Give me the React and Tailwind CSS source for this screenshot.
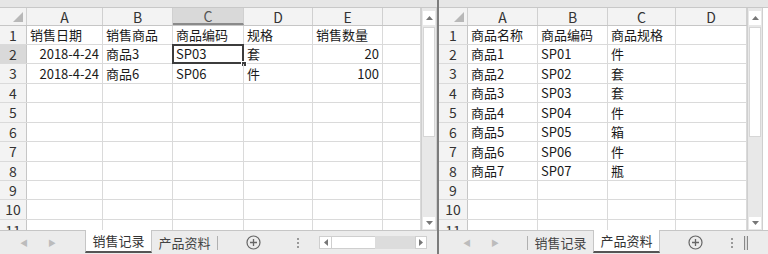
import React from 'react'

const font = { fontFamily: '"Noto Sans CJK SC", "Noto Sans", sans-serif' }

const rowH = ['h-[19px]', 'h-[19px]', 'h-[20px]', 'h-[19px]', 'h-[20px]', 'h-[19px]', 'h-[20px]', 'h-[19px]', 'h-[19px]', 'h-[20px]']

const Corner = () => (
  <svg width="10" height="10" viewBox="0 0 10 10" className="absolute right-[3px] bottom-[3px]">
    <polygon points="10,0 10,10 0,10" fill="#b8b8b8" />
  </svg>
)

const Sheet = ({ cols, rows, selCol, selRow, selCell }) => (
  <div className="flex-1 flex flex-col overflow-hidden">
    {/* column headers */}
    <div className="flex h-[18px] shrink-0 bg-[#f3f3f3] border-b border-[#c6c6c6]">
      {cols.map((c, i) => (
        <div
          key={i}
          className={`relative shrink-0 flex items-center justify-center border-r border-[#d0d0d0] text-[14px] leading-none ${
            i === selCol ? 'bg-[#d9d9d9] text-[#555] border-b-2 border-b-[#8a8a8a]' : 'text-[#333]'
          } ${c.w} ${c.grow ? 'flex-1' : ''}`}
        >
          {i === 0 ? <Corner /> : c.label}
        </div>
      ))}
    </div>
    {/* data rows */}
    {Array.from({ length: 11 }).map((_, r) => (
      <div key={r} className={`flex shrink-0 border-b border-[#dadada] ${r < 10 ? rowH[r] : 'flex-1'}`}>
        {cols.map((c, i) => {
          if (i === 0) {
            return (
              <div
                key={i}
                className={`shrink-0 flex items-center justify-center border-r border-[#c6c6c6] text-[14px] ${
                  r + 1 === selRow ? 'bg-[#d9d9d9]' : 'bg-[#f3f3f3]'
                } text-[#333] ${c.w}`}
              >
                {r + 1}
              </div>
            )
          }
          const v = rows[r] ? rows[r][i - 1] : null
          const right = typeof v === 'object' && v !== null
          const isSel = selCell && selCell[0] === r + 1 && selCell[1] === i
          return (
            <div
              key={i}
              className={`relative shrink-0 flex items-center px-[3px] border-r border-[#dadada] text-[13px] text-[#1a1a1a] whitespace-nowrap ${
                right ? 'justify-end text-[13.5px]' : ''
              } ${c.w} ${c.grow ? 'flex-1' : ''}`}
            >
              {right ? v.r : v}
              {isSel && (
                <>
                  <div className="absolute -left-px -top-px -right-px -bottom-px border-2 border-[#3c3c3c]" />
                  <div className="absolute -right-[4px] -bottom-[4px] w-[6px] h-[6px] bg-[#3c3c3c] border border-white" />
                </>
              )}
            </div>
          )
        })}
      </div>
    ))}
  </div>
)

const VScroll = () => (
  <div className="w-[16px] shrink-0 flex flex-col bg-[#e8e8e8] border-l border-[#cfcfcf] border-r border-r-[#cfcfcf]">
    <div className="h-[14px] mt-[3px] mx-[1px] bg-white flex items-center justify-center">
      <svg width="7" height="4" viewBox="0 0 7 4"><polygon points="0,4 3.5,0 7,4" fill="#777" /></svg>
    </div>
    <div className="h-[110px] mx-[1px] mt-[2px] bg-white border border-[#d6d6d6]" />
    <div className="flex-1" />
    <div className="h-[12px] mb-[1px] mx-[1px] bg-white flex items-center justify-center">
      <svg width="7" height="4" viewBox="0 0 7 4"><polygon points="0,0 3.5,4 7,0" fill="#777" /></svg>
    </div>
  </div>
)

const Arrows = () => (
  <div className="flex items-center gap-[20px] text-[#bcbcbc] text-[8px]">
    <span>◀</span>
    <span>▶</span>
  </div>
)

const Plus = () => (
  <svg width="15" height="15" viewBox="0 0 15 15">
    <circle cx="7.5" cy="7.5" r="6.5" fill="none" stroke="#666" strokeWidth="1.2" />
    <path d="M7.5 4v7M4 7.5h7" stroke="#666" strokeWidth="1.3" />
  </svg>
)

const Dots = () => (
  <div className="flex flex-col gap-[2px]">
    <span className="w-[2px] h-[2px] bg-[#999]" />
    <span className="w-[2px] h-[2px] bg-[#999]" />
    <span className="w-[2px] h-[2px] bg-[#999]" />
  </div>
)

const Tab = ({ label, active }) => (
  <div
    className={`h-full flex items-center justify-center text-[13px] ${
      active
        ? 'w-[67px] bg-white text-[#333] border-x border-[#c6c6c6] border-b-2 border-b-[#555] -mt-px'
        : 'w-[65px] text-[#444]'
    }`}
  >
    {label}
  </div>
)

const leftCols = [
  { w: 'w-[27px]' },
  { w: 'w-[76px]', label: 'A' },
  { w: 'w-[70px]', label: 'B' },
  { w: 'w-[71px]', label: 'C' },
  { w: 'w-[69px]', label: 'D' },
  { w: 'w-[70px]', label: 'E' },
  { w: 'w-[10px]', grow: true, label: '' },
]

const leftRows = [
  ['销售日期', '销售商品', '商品编码', '规格', '销售数量'],
  [{ r: '2018-4-24' }, '商品3', 'SP03', '套', { r: '20' }],
  [{ r: '2018-4-24' }, '商品6', 'SP06', '件', { r: '100' }],
]

const rightCols = [
  { w: 'w-[29px]' },
  { w: 'w-[70px]', label: 'A' },
  { w: 'w-[70px]', label: 'B' },
  { w: 'w-[68px]', label: 'C' },
  { w: 'w-[10px]', grow: true, label: 'D' },
]

const rightRows = [
  ['商品名称', '商品编码', '商品规格'],
  ['商品1', 'SP01', '件'],
  ['商品2', 'SP02', '套'],
  ['商品3', 'SP03', '套'],
  ['商品4', 'SP04', '件'],
  ['商品5', 'SP05', '箱'],
  ['商品6', 'SP06', '件'],
  ['商品7', 'SP07', '瓶'],
]

export default function App() {
  return (
    <div className="w-[768px] h-[254px] flex bg-white overflow-hidden" style={font}>
      {/* Left window */}
      <div className="w-[437px] shrink-0 flex flex-col">
        <div className="h-[8px] shrink-0 bg-[#e6e6e6] border-b border-[#c8c8c8]" />
        <div className="h-[222px] shrink-0 flex">
          <Sheet cols={leftCols} rows={leftRows} selCol={3} selRow={2} selCell={[2, 3]} />
          <VScroll />
        </div>
        <div className="flex-1 flex items-stretch bg-[#ececec] border-t border-[#c6c6c6]">
          <div className="w-[85px] pl-[20px] flex items-center">
            <Arrows />
          </div>
          <Tab label="销售记录" active />
          <Tab label="产品资料" />
          <div className="w-px h-[14px] bg-[#b0b0b0] self-center" />
          <div className="w-[70px] flex items-center justify-center">
            <Plus />
          </div>
          <div className="w-[20px] flex items-center justify-center">
            <Dots />
          </div>
          {/* horizontal scrollbar */}
          <div className="ml-[11px] w-[108px] h-[13px] self-center flex bg-[#dcdcdc]">
            <div className="w-[13px] bg-white border border-[#cfcfcf] flex items-center justify-center">
              <svg width="4" height="7" viewBox="0 0 4 7"><polygon points="4,0 0,3.5 4,7" fill="#777" /></svg>
            </div>
            <div className="w-[43px] bg-white border-y border-[#cfcfcf]" />
            <div className="flex-1" />
            <div className="w-[12px] bg-white border border-[#cfcfcf] flex items-center justify-center">
              <svg width="4" height="7" viewBox="0 0 4 7"><polygon points="0,0 4,3.5 0,7" fill="#777" /></svg>
            </div>
          </div>
        </div>
      </div>

      {/* divider */}
      <div className="w-[2px] shrink-0 bg-[#7c7c7c]" />

      {/* Right window */}
      <div className="flex-1 flex flex-col">
        <div className="h-[8px] shrink-0 bg-[#e6e6e6] border-b border-[#c8c8c8]" />
        <div className="h-[222px] shrink-0 flex">
          <Sheet cols={rightCols} rows={rightRows} />
          <VScroll />
          <div className="w-[5px] bg-white" />
        </div>
        <div className="flex-1 flex items-stretch bg-[#ececec] border-t border-[#c6c6c6]">
          <div className="w-[88px] pl-[24px] flex items-center">
            <Arrows />
          </div>
          <div className="w-px h-[14px] bg-[#b0b0b0] self-center" />
          <Tab label="销售记录" />
          <Tab label="产品资料" active />
          <div className="w-[70px] flex items-center justify-center">
            <Plus />
          </div>
          <div className="w-[4px] flex items-center justify-center">
            <Dots />
          </div>
          <div className="ml-[10px] w-[4px] h-[14px] self-center border-x border-[#888] bg-[#ddd]" />
        </div>
      </div>
    </div>
  )
}
